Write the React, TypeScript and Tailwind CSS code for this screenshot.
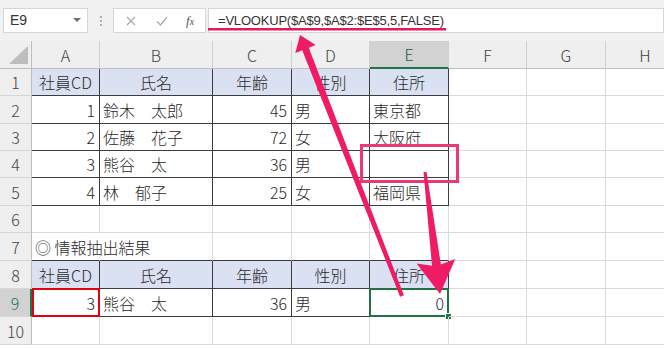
import React from 'react'

const colW = ['w-[68px]', 'w-[113px]', 'w-[79px]', 'w-[78px]', 'w-[79px]', 'w-[78px]', 'w-[79px]', 'w-[79px]']
const letters = ['A', 'B', 'C', 'D', 'E', 'F', 'G', 'H']
const rowH = ['h-[27px]', 'h-[28px]', 'h-[27px]', 'h-[27px]', 'h-[28px]', 'h-[27px]', 'h-[28px]', 'h-[28px]', 'h-[28px]', 'h-[28px]']

type Cell = { t?: string; a?: 'l' | 'r' | 'c' }

const head: Cell[] = [
  { t: '社員CD', a: 'c' },
  { t: '氏名', a: 'c' },
  { t: '年齢', a: 'c' },
  { t: '性別', a: 'c' },
  { t: '住所', a: 'c' },
]

const data: Cell[][] = [
  head,
  [{ t: '1', a: 'r' }, { t: '鈴木　太郎' }, { t: '45', a: 'r' }, { t: '男' }, { t: '東京都' }],
  [{ t: '2', a: 'r' }, { t: '佐藤　花子' }, { t: '72', a: 'r' }, { t: '女' }, { t: '大阪府' }],
  [{ t: '3', a: 'r' }, { t: '熊谷　太' }, { t: '36', a: 'r' }, { t: '男' }, {}],
  [{ t: '4', a: 'r' }, { t: '林　郁子' }, { t: '25', a: 'r' }, { t: '女' }, { t: '福岡県' }],
  [],
  [{ t: '◎ 情報抽出結果' }],
  head,
  [{ t: '3', a: 'r' }, { t: '熊谷　太' }, { t: '36', a: 'r' }, { t: '男' }, { t: '0', a: 'r' }],
  [],
]

function GridCell({ r, c }: { r: number; c: number }) {
  const cell = data[r][c] || {}
  const inTable = (r <= 4 || r === 7 || r === 8) && c <= 4
  const blue = (r === 0 || r === 7) && c <= 4
  const bottomDark = inTable || (r === 6 && c <= 4)
  const hideRight = r === 6 && c === 0
  const align = cell.a === 'r' ? 'justify-end pr-[4px]' : cell.a === 'c' ? 'justify-center' : 'justify-start pl-[3px]'

  return (
    <div
      className={
        'relative flex shrink-0 items-center whitespace-nowrap border-r border-b ' +
        colW[c] + ' ' + align +
        (inTable ? ' border-r-[#3c3c3c]' : hideRight ? ' border-r-transparent' : ' border-r-[#dadada]') +
        (bottomDark ? ' border-b-[#3c3c3c]' : ' border-b-[#dadada]') +
        (blue ? ' bg-[#d9e1f2]' : '')
      }
    >
      {cell.t && <span className="relative z-10">{cell.t}</span>}
      {r === 8 && c === 0 && (
        <div className="absolute -top-px left-0 -right-px -bottom-px border-2 border-[#e3000f]"></div>
      )}
      {r === 8 && c === 4 && (
        <>
          <div className="absolute -top-px -left-px -right-px -bottom-px border-2 border-[#217346]"></div>
          <div className="absolute -right-[4px] -bottom-[4px] h-[7px] w-[7px] border border-white bg-[#217346]"></div>
        </>
      )}
    </div>
  )
}

export default function App() {
  return (
    <div className="relative h-[349px] w-[664px] overflow-hidden bg-white font-['Noto_Sans_CJK_JP',sans-serif] text-[16px] font-light text-[#2a2a2a]">
      {/* formula bar */}
      <div className="flex h-[41px] items-start bg-[#f1f1f1] pt-[8px]">
        <div className="ml-[3px] flex h-[25px] w-[85px] items-center justify-between border border-[#d6d6d6] bg-white pl-[6px] pr-[6px] font-['Liberation_Sans',sans-serif] text-[14px] font-normal text-[#333]">
          <span>E9</span>
          <svg width="8" height="5" viewBox="0 0 8 5">
            <path d="M0 0 L8 0 L4 4 Z" fill="#6f6f6f" />
          </svg>
        </div>
        <div className="flex w-[25px] flex-col items-center gap-[2px] pt-[8px]">
          <div className="h-[2px] w-[2px] bg-[#b0b0b0]"></div>
          <div className="h-[2px] w-[2px] bg-[#b0b0b0]"></div>
          <div className="h-[2px] w-[2px] bg-[#b0b0b0]"></div>
        </div>
        <div className="flex h-[25px] w-[93px] items-center border border-[#d6d6d6] bg-white">
          <svg className="ml-[12px]" width="10" height="10" viewBox="0 0 10 10">
            <path d="M1 1 L9 9 M9 1 L1 9" stroke="#a8a8a8" strokeWidth="1.2" />
          </svg>
          <svg className="ml-[20px]" width="12" height="10" viewBox="0 0 12 10">
            <path d="M1 5.5 L4.5 9 L11 1" stroke="#a8a8a8" strokeWidth="1.2" fill="none" />
          </svg>
          <span className="ml-[18px] font-['Liberation_Serif',serif] text-[13px] font-normal italic text-[#555]">
            f<span className="text-[10px]">x</span>
          </span>
        </div>
        <div className="ml-[2px] flex h-[25px] flex-1 items-center border border-[#d6d6d6] bg-white pl-[9px] font-['Liberation_Sans',sans-serif] text-[13px] font-normal tracking-[-0.2px] text-[#333]">
          =VLOOKUP($A$9,$A$2:$E$5,5,FALSE)
        </div>
      </div>

      {/* column headers */}
      <div className="flex h-[28px] text-[#444]">
        <div className="flex w-[32px] shrink-0 items-end justify-end border-r border-b border-r-[#bfbfbf] border-b-[#bfbfbf] bg-[#efefef] pr-[3px] pb-[4px]">
          <svg width="19" height="18" viewBox="0 0 19 18">
            <path d="M19 0 L19 18 L0 18 Z" fill="#bdbdbd" />
          </svg>
        </div>
        {letters.map((l, i) => (
          <div
            key={l}
            className={
              'flex shrink-0 items-center justify-center border-r border-r-[#d0d0d0] ' +
              colW[i] +
              (i === 4
                ? ' border-b-2 border-b-[#217346] bg-[#d2d2d2] text-[#2d5e3e]'
                : ' border-b border-b-[#bfbfbf] bg-[#efefef]')
            }
          >
            {l}
          </div>
        ))}
      </div>

      {/* rows */}
      {data.map((_, r) => (
        <div key={r} className={'flex ' + rowH[r]}>
          <div
            className={
              'flex w-[32px] shrink-0 items-center justify-center border-b border-b-[#d6d6d6] ' +
              (r === 8
                ? 'border-r-2 border-r-[#217346] bg-[#d2d2d2] text-[#217346]'
                : 'border-r border-r-[#bfbfbf] bg-[#efefef] text-[#444]')
            }
          >
            {r + 1}
          </div>
          {letters.map((_, c) => (
            <GridCell key={c} r={r} c={c} />
          ))}
        </div>
      ))}

      {/* annotations */}
      <svg className="pointer-events-none absolute inset-0 z-20" width="664" height="349" viewBox="0 0 664 349">
        <rect x="208" y="28" width="238" height="2.5" fill="#e3195c" />
        <rect x="361.5" y="145.5" width="96" height="36" fill="none" stroke="#ea3a72" strokeWidth="3" />
        <polygon
          points="300,35 315.7,45 308.8,47.7 403.9,295.3 400.1,296.7 302.2,50.3 295.3,53"
          fill="#ef1c65"
        />
        <polygon
          points="440,294 455.3,258.9 440.9,264.6 426.5,171.8 423.5,172.2 432,265.7 416.6,263.6"
          fill="#ef1c65"
        />
      </svg>
    </div>
  )
}
